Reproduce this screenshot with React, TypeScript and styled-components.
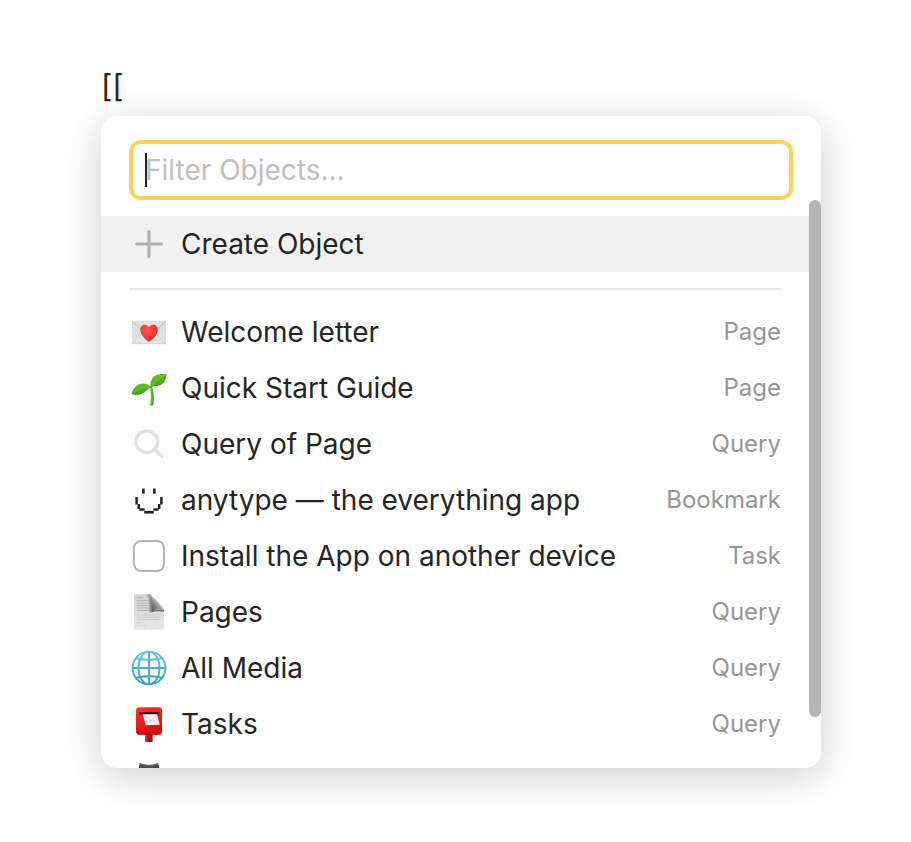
import React, { useState } from "react";
import styled, { createGlobalStyle } from "styled-components";

const GlobalStyle = createGlobalStyle`
  *, *::before, *::after { box-sizing: border-box; }
  body {
    margin: 0;
    background: #ffffff;
    color: #252525;
    font-family: Inter, "Liberation Sans", sans-serif;
    font-size: 28px;
    line-height: 40px;
  }
`;

const Page = styled.main`
  padding: 66px 90px 72px 101px;
`;

const Typed = styled.p`
  margin: 0 0 10px;
  font-size: 31px;
`;

const Menu = styled.section`
  display: flex;
  flex-direction: column;
  padding-top: 24px;
  overflow: hidden;
  border-radius: 16px;
  background: #ffffff;
  box-shadow: 0 8px 40px rgba(0, 0, 0, 0.2);
`;

const Filter = styled.label`
  position: relative;
  display: flex;
  margin: 0 28px;
  padding: 6px 12px;
  border: 4px solid #ffd15b;
  border-radius: 12px;
`;

const FilterInput = styled.input`
  flex: 1;
  min-width: 0;
  height: 40px;
  padding: 0;
  border: 0;
  outline: 0;
  background: transparent;
  color: inherit;
  font: inherit;
  caret-color: transparent;

  &::placeholder {
    color: #bfbfbf;
    opacity: 1;
  }
`;

const Caret = styled.span`
  position: absolute;
  top: 9px;
  left: 12px;
  width: 2px;
  height: 34px;
  background: #252525;
`;

const ScrollArea = styled.div`
  display: flex;
  max-height: 568px;
`;

const Items = styled.div`
  flex: 1;
  min-width: 0;
  padding: 16px 0;
  overflow: hidden;
`;

const Scrollbar = styled.div`
  width: 12px;
`;

const Thumb = styled.div`
  height: 91%;
  border-radius: 6px;
  background: #b5b5b5;
`;

const List = styled.ul`
  margin: 0;
  padding: 0;
  list-style: none;
`;

const Row = styled.li`
  display: flex;
  align-items: center;
  gap: 14px;
  height: 56px;
  padding: 0 28px 0 30px;
`;

const RowButton = styled.button`
  display: flex;
  flex: 1;
  align-items: center;
  gap: 14px;
  min-width: 0;
  height: 56px;
  padding: 0;
  border: 0;
  background: transparent;
  color: inherit;
  font: inherit;
  text-align: left;
  cursor: pointer;
`;

const CreateButton = styled(RowButton)`
  width: 100%;
  padding: 0 28px 0 30px;
  background: #f1f1f1;
`;

const Divider = styled.hr`
  height: 2px;
  margin: 16px 28px 14px;
  border: 0;
  background: #e8e8e8;
`;

const Name = styled.span`
  flex: 1;
  min-width: 0;
  overflow: hidden;
  text-overflow: ellipsis;
  white-space: nowrap;
`;

const Kind = styled.span`
  color: #969696;
  font-size: 24px;
`;

const IconSvg = styled.svg`
  flex: none;
  width: 36px;
  height: 36px;
`;

const TaskBox = styled.input`
  flex: none;
  width: 32px;
  height: 32px;
  margin: 0 2px;
  appearance: none;
  border: 2px solid #b6b6b6;
  border-radius: 8px;
  background: #ffffff;

  &:checked {
    background: #b6b6b6;
  }
`;

const Icon = ({ children }: { children: React.ReactNode }) => (
  <IconSvg viewBox="0 0 36 36" fill="none" aria-hidden="true">
    {children}
  </IconSvg>
);

const PlusIcon = () => (
  <Icon>
    <path d="M18 5.500v25M5.500 18h25" stroke="#b0b0b0" strokeWidth="3" strokeLinecap="round" />
  </Icon>
);

const LetterIcon = () => (
  <Icon>
    <defs>
      <linearGradient id="paper" x1="0" y1="0" x2="0" y2="1">
        <stop stopColor="#dcdcdc" />
        <stop offset="1" stopColor="#e6e6e6" />
      </linearGradient>
      <radialGradient id="heart" cx=".4" cy=".3" r=".75">
        <stop stopColor="#ff5a55" />
        <stop offset=".6" stopColor="#f03a3a" />
        <stop offset="1" stopColor="#c92229" />
      </radialGradient>
    </defs>
    <rect x="1" y="7" width="34" height="23" rx=".6" fill="url(#paper)" />
    <path d="M1.500 29.500 13 18M34.500 29.500 23 18" stroke="#cbcbcb" strokeWidth=".8" />
    <path d="M1.300 7.300 15 20q3 2.500 6 0L34.700 7.300z" fill="#e3e3e3" />
    <path d="M1.300 7.300 15 20q3 2.500 6 0L34.700 7.300" stroke="#b4b8bb" strokeWidth=".9" />
    <path d="M1 29.700h34" stroke="#cdcdcd" strokeWidth=".7" />
    <path d="M18 27.800C13.600 24.900 9.300 20.700 9.300 15.700c0-2.900 2-5 4.500-5 1.900 0 3.400 1 4.200 2.600.8-1.600 2.300-2.600 4.200-2.600 2.500 0 4.500 2.100 4.500 5 0 5-4.300 9.200-8.700 12.100z" fill="url(#heart)" />
  </Icon>
);

const SeedlingIcon = () => (
  <Icon>
    <defs>
      <linearGradient id="leafA" x1="0" y1="0" x2=".5" y2="1">
        <stop stopColor="#6fcb32" />
        <stop offset="1" stopColor="#3c9d16" />
      </linearGradient>
      <linearGradient id="stem" x1="0" y1="0" x2="1" y2="0">
        <stop stopColor="#7fce3d" />
        <stop offset="1" stopColor="#419b19" />
      </linearGradient>
    </defs>
    <path d="M18.600 17.400c1.500 5 1.900 11 .3 17.700q1.600 1.200 3.300.1C23.400 29 23 22 20.900 16.500z" fill="url(#stem)" />
    <path d="M.500 24C2 18 7 12.800 14 13.700c2.700.4 5 1.800 6.800 3.700-2.200-.1-3.500 1.300-5.300 3.100C12 24 6 26.800.500 24z" fill="url(#leafA)" />
    <path d="M19.600 17.600c-.6-5.800 1.300-10.900 6.400-12.900 3-1.200 6-.3 9.600-1.200-.2 6.500-3.400 11.900-9.400 12.400-2.500.2-4.500-.4-5.900 2.100z" fill="url(#leafA)" />
    <path d="M2.500 22.600c3-2.600 7-5.300 15.500-5.700" stroke="#8fd84c" strokeWidth=".6" />
    <path d="M20.800 16.200C24 10.500 28 8.500 34 5" stroke="#8fd84c" strokeWidth=".6" />
  </Icon>
);

const SearchIcon = () => (
  <Icon>
    <circle cx="15.800" cy="15.700" r="10.900" stroke="#e1e1e1" strokeWidth="3.300" />
    <path d="m24 23.700 6.800 6.800" stroke="#e1e1e1" strokeWidth="3.300" strokeLinecap="round" />
  </Icon>
);

const SmileIcon = () => (
  <Icon>
    <path
      d="M12.400 6.500v5.200M23.400 6.500v5.200M5.600 15v7.400M30.400 15v7.400M7.800 22v5M28.200 22v5M8.400 27.600h5.200M22.400 27.600h5.200"
      stroke="#202020"
      strokeWidth="2.500"
    />
    <path d="M13.200 30.200h9.600" stroke="#202020" strokeWidth="2.700" />
  </Icon>
);

const DocumentIcon = () => (
  <Icon>
    <defs>
      <linearGradient id="sheet" x1="0" y1="0" x2="0" y2="1">
        <stop stopColor="#d2d2d2" />
        <stop offset="1" stopColor="#e8e8e8" />
      </linearGradient>
      <linearGradient id="fold" x1="0" y1="1" x2="1" y2="0">
        <stop offset=".1" stopColor="#4d4d4d" />
        <stop offset=".4" stopColor="#828282" />
        <stop offset=".62" stopColor="#d0d0d0" />
        <stop offset="1" stopColor="#dedede" />
      </linearGradient>
      <linearGradient id="foldShade" x1="0" y1="0" x2="1" y2="0">
        <stop stopColor="#909090" stopOpacity="0" />
        <stop offset="1" stopColor="#707070" />
      </linearGradient>
    </defs>
    <path d="M3 .2h15.500L33 15.500v20.300H3z" fill="url(#sheet)" />
    <path d="M6 3.500h6M6 6.500h12M6 9h13M6 11.500h13M6 14h13M6 16.500h15" stroke="#b0b0b0" strokeWidth=".9" />
    <path d="M6 21h23M6 23.200h22M6 25.400h23M6 29h4M6 31.500h8" stroke="#c8c8c8" strokeWidth=".8" />
    <path d="M14 .2h5l2.500 3v15H18C19.500 10 18 3 14 .2z" fill="url(#foldShade)" />
    <path d="M17.500.2c3.500 1.600 4.200 5.300 3.500 11.800V18c4-2.800 8.300-4 12-2.500C31 11.500 22 2 17.500.2z" fill="url(#fold)" />
    <path d="M20.800 18c4-2.600 8.700-3.300 12.200-2v1.800c-4-.9-8-.6-12.200.2z" fill="#777777" />
  </Icon>
);

const GlobeIcon = () => (
  <Icon>
    <defs>
      <linearGradient id="globe" x1="0" y1="0" x2="0" y2="1">
        <stop stopColor="#63c4e6" />
        <stop offset="1" stopColor="#369bc3" />
      </linearGradient>
    </defs>
    <circle cx="18" cy="18" r="16.600" fill="#f7fbfd" />
    <g stroke="url(#globe)" strokeWidth="1.900">
      <circle cx="18" cy="18" r="16.400" />
      <ellipse cx="18" cy="18" rx="10.500" ry="16.400" />
      <path d="M5 8.300q13 3 26 0M5 27.700q13-3 26 0" />
    </g>
    <path d="M18 1.500v33M1.500 18h33" stroke="#4aafd4" strokeWidth="2" />
  </Icon>
);

const PostboxIcon = () => (
  <Icon>
    <defs>
      <linearGradient id="box" x1="0" y1="0" x2=".3" y2="1">
        <stop stopColor="#fb3328" />
        <stop offset="1" stopColor="#d90d10" />
      </linearGradient>
    </defs>
    <path d="M14.400 28h7.200v8h-7.200z" fill="#a5161b" />
    <path d="M14.400 28h2v8h-2z" fill="#d8292d" />
    <rect x="5" y="1.200" width="26" height="27.600" rx="3.500" fill="url(#box)" />
    <path d="M6 25.500q.5 2.800 3 2.800h18q2.600 0 3.200-2.800" stroke="#b7090d" strokeWidth=".8" />
    <path d="M8.300 6.200h19.500v2.600H8.300z" fill="#350608" />
    <path d="M11.600 8.200h14.500l2.500 10.500-13.800.5z" fill="#f0f0f0" />
    <path d="m12 8.600 8.600 5.800 5.300-5.800M14.900 18.900l4.300-5.300m2.500.1 6.500 4.800" stroke="#d2d2d2" strokeWidth=".6" />
  </Icon>
);

const CatIcon = () => (
  <Icon>
    <path d="M8.800 1c6 2.400 12.400 2.400 18.400 0L28.500 7v28h-21V7z" fill="#4a4a4a" />
    <path d="M9.200 1.800c6 2.300 11.600 2.300 17.600 0" stroke="#737373" strokeWidth=".8" />
  </Icon>
);

type Entry = { name: string; kind: string; icon?: React.ReactNode };

const entries: Entry[] = [
  { name: "Welcome letter", kind: "Page", icon: <LetterIcon /> },
  { name: "Quick Start Guide", kind: "Page", icon: <SeedlingIcon /> },
  { name: "Query of Page", kind: "Query", icon: <SearchIcon /> },
  { name: "anytype — the everything app", kind: "Bookmark", icon: <SmileIcon /> },
  { name: "Install the App on another device", kind: "Task" },
  { name: "Pages", kind: "Query", icon: <DocumentIcon /> },
  { name: "All Media", kind: "Query", icon: <GlobeIcon /> },
  { name: "Tasks", kind: "Query", icon: <PostboxIcon /> },
];

export default function App() {
  const [filter, setFilter] = useState("");
  const shown = entries.filter((e) => e.name.toLowerCase().includes(filter.toLowerCase()));

  return (
    <>
      <GlobalStyle />
      <Page>
        <Typed>[[</Typed>
        <Menu aria-label="Link to object">
          <Filter>
            <FilterInput
              type="text"
              aria-label="Filter objects"
              placeholder="Filter Objects..."
              value={filter}
              onChange={(e) => setFilter(e.target.value)}
            />
            {filter === "" && <Caret />}
          </Filter>
          <ScrollArea>
            <Items>
              <CreateButton type="button">
                <PlusIcon />
                <Name>Create Object</Name>
              </CreateButton>
              <Divider />
              <List>
                {shown.map((entry) => (
                  <Row key={entry.name}>
                    {!entry.icon && <TaskBox type="checkbox" aria-label={entry.name} />}
                    <RowButton type="button">
                      {entry.icon}
                      <Name>{entry.name}</Name>
                      <Kind>{entry.kind}</Kind>
                    </RowButton>
                  </Row>
                ))}
                <Row>
                  <CatIcon />
                </Row>
              </List>
            </Items>
            <Scrollbar>
              <Thumb />
            </Scrollbar>
          </ScrollArea>
        </Menu>
      </Page>
    </>
  );
}
